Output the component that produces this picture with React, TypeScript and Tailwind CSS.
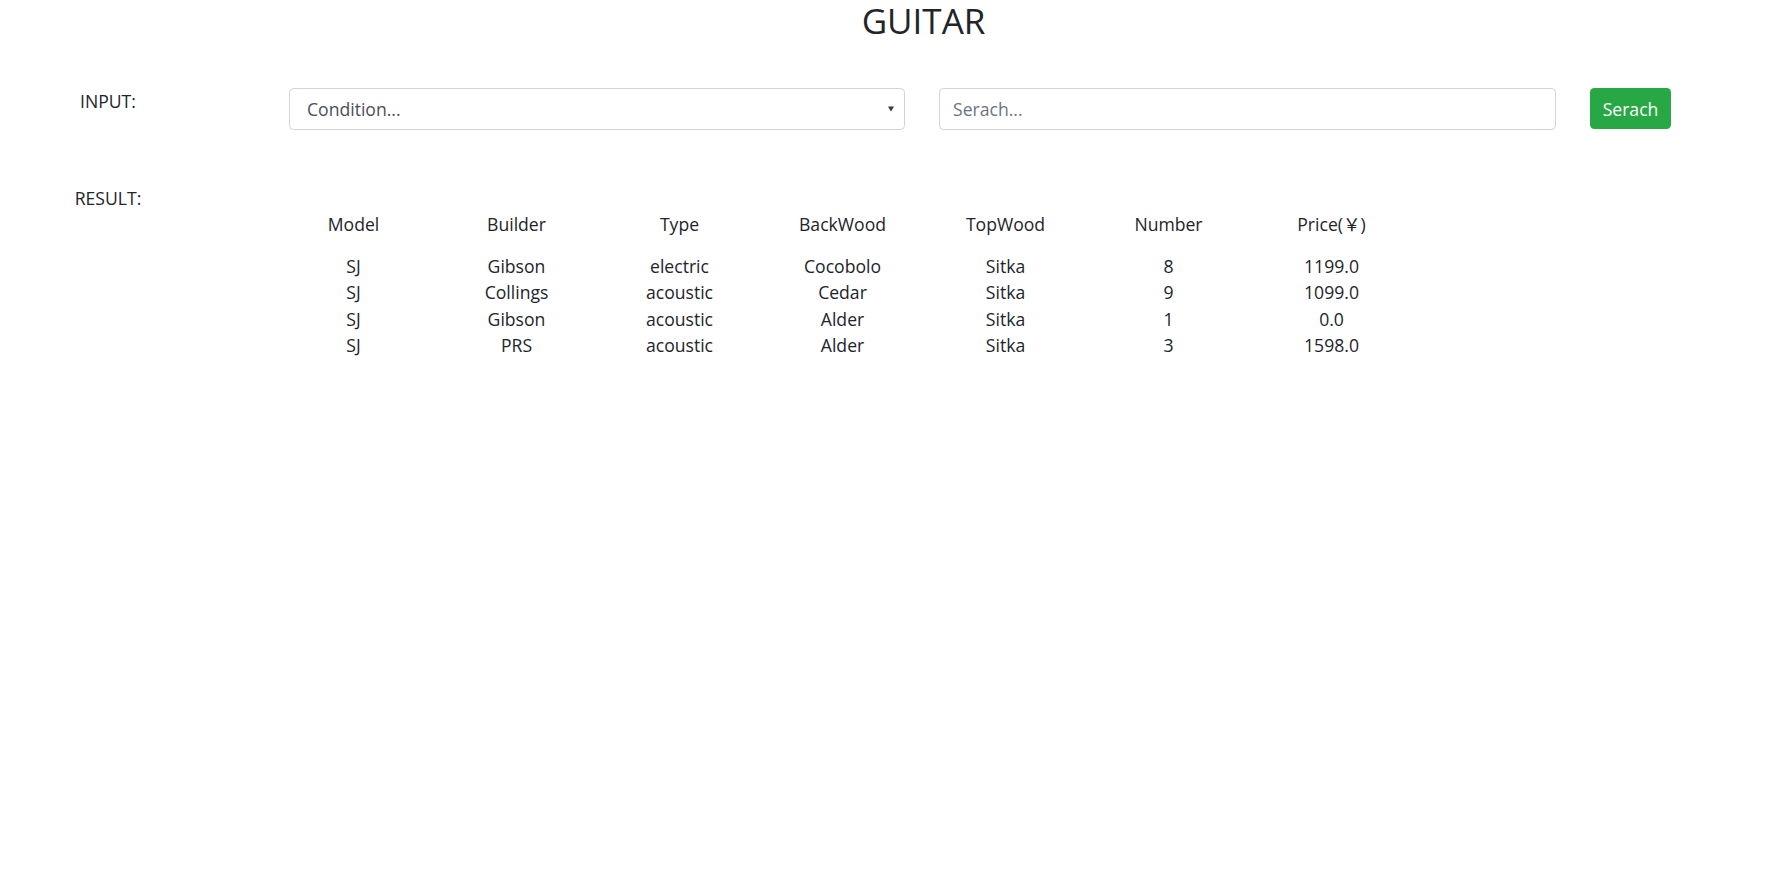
import React from 'react';

const COLUMNS = ['Model', 'Builder', 'Type', 'BackWood', 'TopWood', 'Number', 'Price(￥)'];

const GUITARS = [
  ['SJ', 'Gibson', 'electric', 'Cocobolo', 'Sitka', '8', '1199.0'],
  ['SJ', 'Collings', 'acoustic', 'Cedar', 'Sitka', '9', '1099.0'],
  ['SJ', 'Gibson', 'acoustic', 'Alder', 'Sitka', '1', '0.0'],
  ['SJ', 'PRS', 'acoustic', 'Alder', 'Sitka', '3', '1598.0'],
];

export default function App() {
  return (
    <div
      className="min-h-[881px] w-[1771px] bg-white text-[#212529] text-[17.6px] leading-[26.4px]"
      style={{ fontFamily: '"Segoe UI", "Open Sans", "Noto Sans CJK SC", sans-serif' }}
    >
      {/* Title */}
      <h1 className="pl-[76px] text-center text-[35px] leading-[42px] font-normal">GUITAR</h1>

      {/* Input row */}
      <div className="mt-[46px] flex items-start">
        <div className="w-[216px] text-center">INPUT:</div>
        <div className="ml-[73px] relative w-[616px] h-[42px] border border-[#ced4da] rounded-[4.4px] bg-white flex items-center">
          <span className="pl-[17px] pt-[1px] text-[#495057]">Condition...</span>
          <svg className="absolute right-[10px] top-[17px]" width="6" height="6" viewBox="0 0 6 6">
            <path d="M0 0.5h6L3 5.5z" fill="#343a40" />
          </svg>
        </div>
        <div className="ml-[34px] w-[617px] h-[42px] border border-[#ced4da] rounded-[4.4px] bg-white flex items-center">
          <span className="pl-[13px] pt-[1px] text-[#6c757d]">Serach...</span>
        </div>
        <button className="ml-[34px] w-[81px] h-[41px] rounded-[4.4px] bg-[#28a745] text-white pt-[1px]">
          Serach
        </button>
      </div>

      {/* Result */}
      <div className="mt-[54px] flex items-start">
        <div className="w-[216px] text-center pt-[1px]">RESULT:</div>
        <div className="ml-[56px] mt-[27px]">
          <div className="flex">
            {COLUMNS.map((c) => (
              <div key={c} className="w-[163px] text-center">{c}</div>
            ))}
          </div>
          <div className="mt-[15.5px]">
            {GUITARS.map((row, i) => (
              <div key={i} className="flex">
                {row.map((cell, j) => (
                  <div key={j} className="w-[163px] text-center">{cell}</div>
                ))}
              </div>
            ))}
          </div>
        </div>
      </div>
    </div>
  );
}
